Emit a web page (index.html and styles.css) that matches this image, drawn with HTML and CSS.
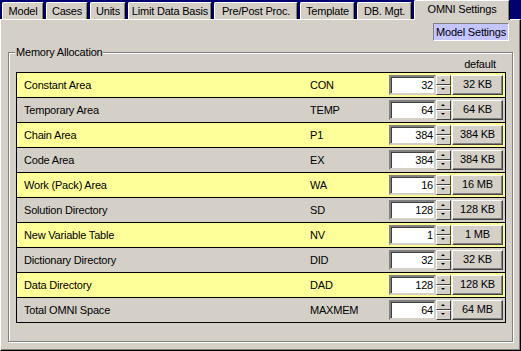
FILE: index.html
```html
<!DOCTYPE html>
<html lang="en">
<head>
    <meta charset="UTF-8">
    <title>OMNI Settings</title>
    <link rel="stylesheet" href="styles.css">
</head>
<body>
    <div class="tabs">
        <div class="tab">Model</div>
        <div class="tab">Cases</div>
        <div class="tab">Units</div>
        <div class="tab">Limit Data Basis</div>
        <div class="tab">Pre/Post Proc.</div>
        <div class="tab">Template</div>
        <div class="tab">DB. Mgt.</div>
        <div class="tab tab-active">OMNI Settings</div>
    </div>

    <div class="page">
        <div class="toolbar">
            <span class="model-btn">Model Settings</span>
        </div>

        <fieldset class="group">
            <legend>Memory Allocation</legend>
            <div class="head-row">
                <span class="head-default">default</span>
            </div>
            <div class="mem-table">
                <div class="mem-row">
                    <span class="mem-name">Constant Area</span>
                    <span class="mem-code">CON</span>
                    <span class="spin-input">32</span>
                    <span class="spin"><i class="up"></i><i class="down"></i></span>
                    <span class="def-btn">32 KB</span>
                </div>
                <div class="mem-row">
                    <span class="mem-name">Temporary Area</span>
                    <span class="mem-code">TEMP</span>
                    <span class="spin-input">64</span>
                    <span class="spin"><i class="up"></i><i class="down"></i></span>
                    <span class="def-btn">64 KB</span>
                </div>
                <div class="mem-row">
                    <span class="mem-name">Chain Area</span>
                    <span class="mem-code">P1</span>
                    <span class="spin-input">384</span>
                    <span class="spin"><i class="up"></i><i class="down"></i></span>
                    <span class="def-btn">384 KB</span>
                </div>
                <div class="mem-row">
                    <span class="mem-name">Code Area</span>
                    <span class="mem-code">EX</span>
                    <span class="spin-input">384</span>
                    <span class="spin"><i class="up"></i><i class="down"></i></span>
                    <span class="def-btn">384 KB</span>
                </div>
                <div class="mem-row">
                    <span class="mem-name">Work (Pack) Area</span>
                    <span class="mem-code">WA</span>
                    <span class="spin-input">16</span>
                    <span class="spin"><i class="up"></i><i class="down"></i></span>
                    <span class="def-btn">16 MB</span>
                </div>
                <div class="mem-row">
                    <span class="mem-name">Solution Directory</span>
                    <span class="mem-code">SD</span>
                    <span class="spin-input">128</span>
                    <span class="spin"><i class="up"></i><i class="down"></i></span>
                    <span class="def-btn">128 KB</span>
                </div>
                <div class="mem-row">
                    <span class="mem-name">New Variable Table</span>
                    <span class="mem-code">NV</span>
                    <span class="spin-input">1</span>
                    <span class="spin"><i class="up"></i><i class="down"></i></span>
                    <span class="def-btn">1 MB</span>
                </div>
                <div class="mem-row">
                    <span class="mem-name">Dictionary Directory</span>
                    <span class="mem-code">DID</span>
                    <span class="spin-input">32</span>
                    <span class="spin"><i class="up"></i><i class="down"></i></span>
                    <span class="def-btn">32 KB</span>
                </div>
                <div class="mem-row">
                    <span class="mem-name">Data Directory</span>
                    <span class="mem-code">DAD</span>
                    <span class="spin-input">128</span>
                    <span class="spin"><i class="up"></i><i class="down"></i></span>
                    <span class="def-btn">128 KB</span>
                </div>
                <div class="mem-row">
                    <span class="mem-name">Total OMNI Space</span>
                    <span class="mem-code">MAXMEM</span>
                    <span class="spin-input">64</span>
                    <span class="spin"><i class="up"></i><i class="down"></i></span>
                    <span class="def-btn">64 MB</span>
                </div>
            </div>
        </fieldset>
    </div>
</body>
</html>
```

FILE: styles.css
```css
:root {
    --face: #d4d0c8;
    --shadow: #808080;
    --dark: #404040;
    --navy: #000070;
    --row-yellow: #ffff99;
}

* {
    box-sizing: border-box;
}

body {
    margin: 0;
    width: 521px;
    height: 351px;
    overflow: hidden;
    background-color: var(--navy);
    font-family: "Liberation Sans", Arial, sans-serif;
    font-size: 11px;
    letter-spacing: -0.2px;
    color: #000;
    display: flex;
    flex-direction: column;
}

/* tab strip */
.tabs {
    height: 19px;
    padding-left: 2px;
    display: grid;
    grid-template-columns: 42px 42px 36px 84px 84px 55px 55px 96px;
    column-gap: 2px;
    align-items: end;
}

.tab {
    height: 17px;
    background-color: var(--face);
    border-top: 1px solid #fff;
    border-left: 1px solid #fff;
    border-right: 1px solid #000;
    border-radius: 2px 2px 0 0;
    box-shadow: inset -1px 0 0 var(--shadow);
    text-align: center;
    line-height: 17px;
    white-space: nowrap;
}

.tab-active {
    height: 20px;
    margin-bottom: -1px;
    line-height: 17px;
    position: relative;
    z-index: 1;
}

/* page */
.page {
    flex: 1;
    background-color: var(--face);
    border-top: 1px solid #fff;
    border-left: 1px solid #fff;
    border-right: 1px solid #000;
    border-bottom: 1px solid #000;
    box-shadow: inset -1px -1px 0 var(--shadow);
}

.toolbar {
    display: flex;
    justify-content: flex-end;
    padding: 3px 11px 0 0;
}

.model-btn {
    height: 18px;
    padding: 0 2px;
    background-color: #c4c4ff;
    border: 1px solid;
    border-color: var(--shadow) #fff #fff var(--shadow);
    line-height: 16px;
}

/* group box */
.group {
    margin: 5px 7px 0 7px;
    padding: 0 4px 19px 7px;
    height: 296px;
    border: 1px solid var(--shadow);
    box-shadow: inset 1px 1px 0 #fff, 1px 1px 0 #fff;
}

.group legend {
    padding: 0 1px;
    margin-left: -1px;
    line-height: 12px;
    background-color: var(--face);
}

.head-row {
    width: 490px;
    height: 14px;
    display: flex;
    justify-content: flex-end;
}

.head-default {
    width: 52px;
    text-align: center;
    line-height: 12px;
}

/* memory table */
.mem-table {
    width: 490px;
    border: 1px solid #000;
}

.mem-row {
    height: 25px;
    display: grid;
    grid-template-columns: 286px 86px 47px 15px 52px;
    align-items: center;
    border-bottom: 1px solid #000;
    background-color: var(--face);
}

.mem-row:nth-child(odd) {
    background-color: var(--row-yellow);
}

.mem-row:last-child {
    height: 24px;
    border-bottom: none;
}

.mem-name {
    padding-left: 7px;
}

.mem-code {
    padding-left: 7px;
}

.spin-input {
    height: 20px;
    background-color: #fff;
    border: 2px solid;
    border-color: var(--shadow) var(--face) var(--face) var(--shadow);
    box-shadow: inset 1px 1px 0 var(--dark);
    text-align: right;
    padding-right: 1px;
    line-height: 16px;
}

.spin {
    height: 20px;
    display: flex;
    flex-direction: column;
}

.spin i {
    flex: 1;
    position: relative;
    background-color: var(--face);
    border: 1px solid;
    border-color: #fff var(--dark) var(--dark) #fff;
}

.spin i::after {
    content: "";
    position: absolute;
    left: 4px;
    top: 3px;
    border-left: 2px solid transparent;
    border-right: 2px solid transparent;
}

.spin .up::after {
    border-bottom: 2px solid #000;
}

.spin .down::after {
    top: 2px;
    border-top: 2px solid #000;
}

.def-btn {
    height: 20px;
    margin-left: 1px;
    background-color: var(--face);
    border: 1px solid;
    border-color: #fff var(--dark) var(--dark) #fff;
    box-shadow: inset -1px -1px 0 var(--shadow);
    text-align: center;
    line-height: 17px;
}
```
